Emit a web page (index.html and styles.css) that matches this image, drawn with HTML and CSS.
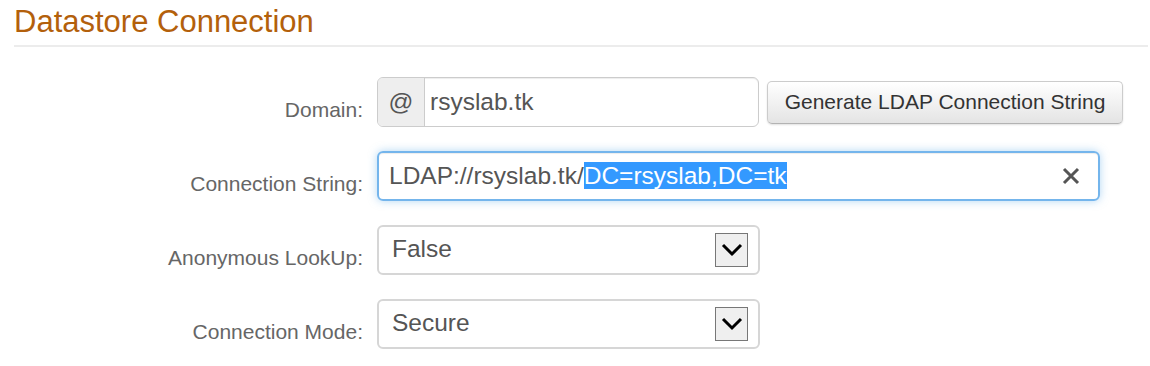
FILE: index.html
```html
<!DOCTYPE html>
<html>
<head>
<meta charset="utf-8">
<link rel="stylesheet" href="styles.css">
</head>
<body>
<h1 class="title">Datastore Connection</h1>
<div class="form">
  <div class="label">Domain:</div>
  <div class="controls">
    <div class="input-group">
      <span class="addon">@</span>
      <span class="field">rsyslab.tk</span>
    </div>
    <button class="btn">Generate LDAP Connection String</button>
  </div>

  <div class="label">Connection String:</div>
  <div class="controls">
    <div class="input focused">
      <span class="value">LDAP://rsyslab.tk/<span class="sel">DC=rsyslab,DC=tk</span></span>
      <svg class="clear" width="18" height="18" viewBox="0 0 18 18"><path d="M2 2 L16 16 M16 2 L2 16" stroke="#555" stroke-width="3" fill="none"/></svg>
    </div>
  </div>

  <div class="label">Anonymous LookUp:</div>
  <div class="controls">
    <div class="select">
      <span class="value">False</span>
      <span class="arrow"><svg width="22" height="14" viewBox="0 0 22 14"><path d="M2 2 L11 11 L20 2" stroke="#000" stroke-width="3" fill="none"/></svg></span>
    </div>
  </div>

  <div class="label">Connection Mode:</div>
  <div class="controls">
    <div class="select">
      <span class="value">Secure</span>
      <span class="arrow"><svg width="22" height="14" viewBox="0 0 22 14"><path d="M2 2 L11 11 L20 2" stroke="#000" stroke-width="3" fill="none"/></svg></span>
    </div>
  </div>
</div>
</body>
</html>
```

FILE: styles.css
```css
html, body {
  margin: 0;
  padding: 0;
  background: #fff;
  font-family: "Liberation Sans", Arial, sans-serif;
}

.title {
  margin: 4px 2px 0 14px;
  padding: 0 0 5px 0;
  font-size: 31px;
  line-height: 36px;
  font-weight: normal;
  color: #b3600b;
  border-bottom: 2px solid #ececec;
}

.form {
  display: grid;
  grid-template-columns: 363px 1fr;
  column-gap: 14px;
  row-gap: 24px;
  margin-top: 30px;
}

.label {
  text-align: right;
  padding-top: 21px;
  font-size: 21px;
  line-height: 24px;
  color: #666;
}

.controls {
  display: flex;
  align-items: center;
  height: 50px;
}

.input-group {
  display: flex;
  width: 382px;
  height: 50px;
  box-sizing: border-box;
  border: 1px solid #ccc;
  border-radius: 6px;
  overflow: hidden;
  box-shadow: inset 0 1px 1px rgba(0,0,0,.075);
}

.addon {
  width: 46px;
  flex: none;
  display: flex;
  align-items: center;
  justify-content: center;
  background: #eee;
  border-right: 1px solid #ccc;
  color: #555;
  font-size: 24.5px;
}

.field {
  display: flex;
  align-items: center;
  padding-left: 5px;
  color: #555;
  font-size: 24.5px;
}

.btn {
  margin-left: 8px;
  width: 356px;
  height: 43px;
  box-sizing: border-box;
  border: 1px solid #ccc;
  border-bottom-color: #b3b3b3;
  border-radius: 5px;
  background: linear-gradient(#ffffff, #e4e4e4);
  box-shadow: 0 1px 2px rgba(0,0,0,.12);
  font-family: "Liberation Sans", Arial, sans-serif;
  font-size: 21px;
  color: #333;
  padding: 0;
}

.input {
  display: flex;
  align-items: center;
  justify-content: space-between;
  width: 723px;
  height: 50px;
  box-sizing: border-box;
  border: 1px solid #ccc;
  border-radius: 6px;
  padding: 0 18px 0 11px;
  font-size: 24.5px;
  color: #555;
}

.input.focused {
  border: 2px solid #74b5ec;
  padding-left: 10px;
  box-shadow: inset 0 1px 1px rgba(0,0,0,.075), 0 0 8px rgba(102,175,233,.5);
}

.value {
  white-space: pre;
}

.sel {
  background: #3399ff;
  color: #fff;
}

.select {
  display: flex;
  align-items: center;
  justify-content: space-between;
  width: 383px;
  height: 50px;
  box-sizing: border-box;
  border: 2px solid #d6d6d6;
  border-radius: 6px;
  padding: 0 10px 0 13px;
  font-size: 24.5px;
  color: #555;
}

.select .value {
  margin-top: -2px;
}

.arrow {
  width: 33px;
  height: 34px;
  box-sizing: border-box;
  border: 1px solid #777;
  background: #efefef;
  display: flex;
  align-items: center;
  justify-content: center;
  margin-top: -1px;
}

.arrow svg {
  display: block;
  margin-top: 1px;
}
```
